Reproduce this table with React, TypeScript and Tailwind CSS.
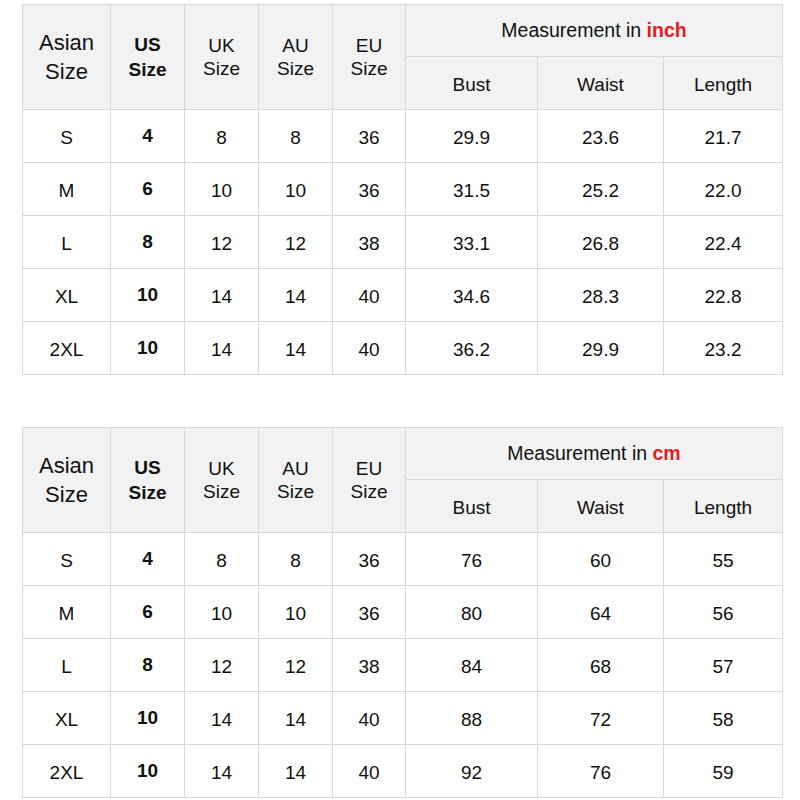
import React from 'react';

type Row = { asian: string; us: string; uk: string; au: string; eu: string; bust: string; waist: string; length: string };

const inchRows: Row[] = [
  { asian: 'S', us: '4', uk: '8', au: '8', eu: '36', bust: '29.9', waist: '23.6', length: '21.7' },
  { asian: 'M', us: '6', uk: '10', au: '10', eu: '36', bust: '31.5', waist: '25.2', length: '22.0' },
  { asian: 'L', us: '8', uk: '12', au: '12', eu: '38', bust: '33.1', waist: '26.8', length: '22.4' },
  { asian: 'XL', us: '10', uk: '14', au: '14', eu: '40', bust: '34.6', waist: '28.3', length: '22.8' },
  { asian: '2XL', us: '10', uk: '14', au: '14', eu: '40', bust: '36.2', waist: '29.9', length: '23.2' },
];

const cmRows: Row[] = [
  { asian: 'S', us: '4', uk: '8', au: '8', eu: '36', bust: '76', waist: '60', length: '55' },
  { asian: 'M', us: '6', uk: '10', au: '10', eu: '36', bust: '80', waist: '64', length: '56' },
  { asian: 'L', us: '8', uk: '12', au: '12', eu: '38', bust: '84', waist: '68', length: '57' },
  { asian: 'XL', us: '10', uk: '14', au: '14', eu: '40', bust: '88', waist: '72', length: '58' },
  { asian: '2XL', us: '10', uk: '14', au: '14', eu: '40', bust: '92', waist: '76', length: '59' },
];

const cell = 'border border-[#d9d9d9] text-center align-middle p-0';
const head = `${cell} bg-[#f2f2f2]`;

const SizeTable: React.FC<{ unit: string; rows: Row[] }> = ({ unit, rows }) => (
  <table className="table-fixed border-collapse w-[760px] text-[19px] text-[#111]">
    <colgroup>
      <col className="w-[88px]" />
      <col className="w-[74px]" />
      <col className="w-[74px]" />
      <col className="w-[74px]" />
      <col className="w-[73px]" />
      <col className="w-[132px]" />
      <col className="w-[126px]" />
      <col className="w-[119px]" />
    </colgroup>
    <thead>
      <tr className="h-[52px]">
        <th rowSpan={2} className={`${head} font-normal text-[22px] leading-[29px]`}>
          Asian<br />Size
        </th>
        <th rowSpan={2} className={`${head} font-bold leading-[25px]`}>
          US<br />Size
        </th>
        <th rowSpan={2} className={`${head} font-normal leading-[23px]`}>
          UK<br />Size
        </th>
        <th rowSpan={2} className={`${head} font-normal leading-[23px]`}>
          AU<br />Size
        </th>
        <th rowSpan={2} className={`${head} font-normal leading-[23px]`}>
          EU<br />Size
        </th>
        <th colSpan={3} className={`${head} font-normal text-[19.5px]`}>
          Measurement in <span className="font-bold text-[#e0201e]">{unit}</span>
        </th>
      </tr>
      <tr className="h-[53px]">
        <th className={`${head} font-normal pt-1`}>Bust</th>
        <th className={`${head} font-normal pt-1`}>Waist</th>
        <th className={`${head} font-normal pt-1`}>Length</th>
      </tr>
    </thead>
    <tbody>
      {rows.map((r) => (
        <tr key={r.asian} className="h-[53px]">
          <td className={`${cell} pt-1`}>{r.asian}</td>
          <td className={`${cell} font-bold`}>{r.us}</td>
          <td className={`${cell} pt-1`}>{r.uk}</td>
          <td className={`${cell} pt-1`}>{r.au}</td>
          <td className={`${cell} pt-1`}>{r.eu}</td>
          <td className={`${cell} pt-1`}>{r.bust}</td>
          <td className={`${cell} pt-1`}>{r.waist}</td>
          <td className={`${cell} pt-1`}>{r.length}</td>
        </tr>
      ))}
    </tbody>
  </table>
);

export default function App() {
  return (
    <div className="w-[800px] h-[800px] bg-white overflow-hidden pt-[4px] pl-[22px] font-['Liberation_Sans',Arial,sans-serif]">
      <div className="flex flex-col gap-[52px]">
        <SizeTable unit="inch" rows={inchRows} />
        <SizeTable unit="cm" rows={cmRows} />
      </div>
    </div>
  );
}
